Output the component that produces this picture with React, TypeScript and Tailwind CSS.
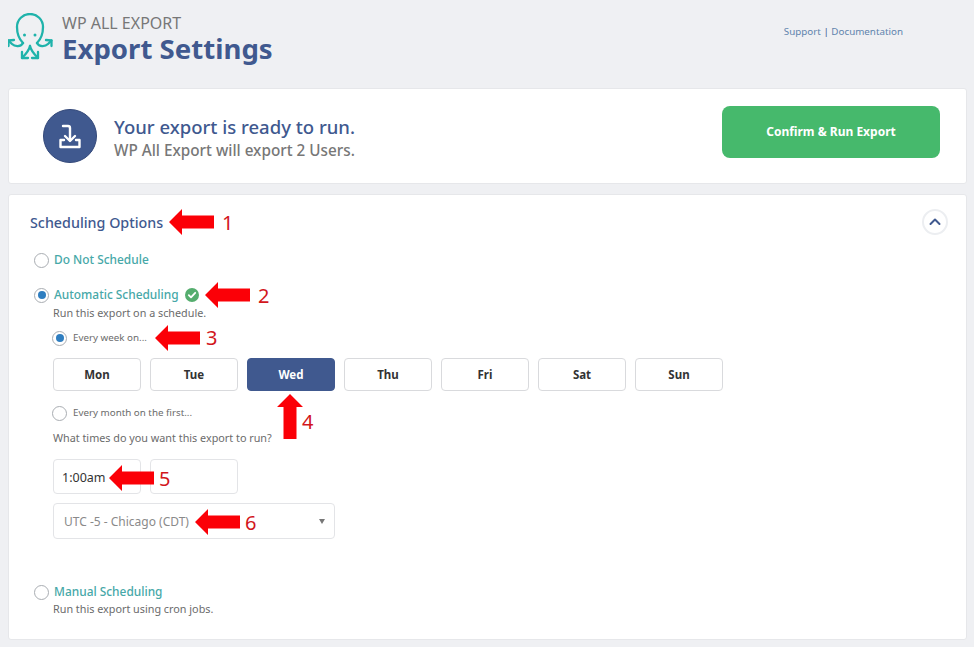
import React from 'react';

const days = ['Mon', 'Tue', 'Wed', 'Thu', 'Fri', 'Sat', 'Sun'];

const Radio: React.FC<{ checked?: boolean }> = ({ checked }) => (
  <span className="w-[15px] h-[15px] shrink-0 rounded-full border border-[#a9adb2] bg-white flex items-center justify-center">
    {checked && <span className="w-[8px] h-[8px] rounded-full bg-[#2f7ec0]" />}
  </span>
);

const Logo = () => (
  <svg width="48" height="50" viewBox="4 5 48 50" fill="none" stroke="#1fb3ab" strokeWidth="2.3" strokeLinecap="round" strokeLinejoin="round">
    <path d="M19 35 C15 31 13 26 13 19 A13 13 0 0 1 39 19 C39 26 37 31 33 35" />
    <path d="M19 35 C17 39 11 39 8 36 L4.500 32.500" />
    <path d="M33 35 C35 39 41 39 44 36 L47.500 32.500" />
    <path d="M4.500 38 L4.500 32.500 L10 32" />
    <path d="M42 32 L47.500 32.500 L47.500 38" />
    <path d="M26 38 C25 43 22 46 18 50" />
    <path d="M26 38 C27 43 30 46 34 50" />
    <path d="M18 44 L18 50 L24 50" />
    <path d="M28 50 L34 50 L34 44" />
    <circle cx="20.500" cy="27" r="1.500" fill="#1fb3ab" stroke="none" />
    <circle cx="31" cy="27" r="1.500" fill="#1fb3ab" stroke="none" />
  </svg>
);

const Arrow: React.FC<{ className: string }> = ({ className }) => (
  <svg className={`absolute ${className}`} width="45" height="26" viewBox="0 0 45 26" fill="#fb0007">
    <path d="M0 13 L13 0 L13 6.500 L45 6.500 L45 19.500 L13 19.500 L13 26 Z" />
  </svg>
);

const Num: React.FC<{ className: string; children: React.ReactNode }> = ({ className, children }) => (
  <span className={`absolute text-[20px] leading-none text-[#d2161c] ${className}`}>{children}</span>
);

export default function App() {
  return (
    <div className="relative w-[974px] h-[647px] overflow-hidden bg-[#eff0f3] pl-[8px] pr-[7px] font-['Noto_Sans',sans-serif]">
      <header className="h-[88px] flex items-start">
        <div className="mt-[13px]">
          <Logo />
        </div>
        <div className="ml-[6px] mt-[14px]">
          <div className="text-[16px] leading-[19px] text-[#777]">WP ALL EXPORT</div>
          <h1 className="text-[27.600px] leading-[31px] font-bold text-[#40598f]">Export Settings</h1>
        </div>
        <div className="ml-auto mr-[64px] mt-[24px] text-[9.800px] leading-[16px] text-[#5f84ad]">
          Support <span className="text-[#40598f]">|</span> Documentation
        </div>
      </header>

      <section className="h-[96px] bg-white rounded-[3px] border border-[#e6e7ea] flex items-center pl-[34px] pr-[26px]">
        <div className="w-[54px] h-[54px] rounded-full bg-[#40598f] border border-[#34497a] flex items-center justify-center">
          <svg width="26" height="26" viewBox="0 0 26 26" fill="none" stroke="#fff" strokeWidth="2.400" strokeLinecap="round" strokeLinejoin="round">
            <path d="M6 3 L11 3 Q13 3 13 5 L13 17" />
            <path d="M8 13 L13 18 L18 13" />
            <path d="M7 17 L3.500 17 L3.500 24 L22.500 24 L22.500 17 L19 17" />
          </svg>
        </div>
        <div className="ml-[17px]">
          <div className="text-[18.500px] leading-[27px] font-medium text-[#40598f]">Your export is ready to run.</div>
          <div className="text-[15.300px] leading-[20px] font-medium text-[#777]">WP All Export will export 2 Users.</div>
        </div>
        <button className="ml-auto mt-[-9px] w-[218px] h-[52px] rounded-[8px] bg-[#46b96c] text-white text-[12px] font-bold">
          Confirm &amp; Run Export
        </button>
      </section>

      <section className="mt-[10px] h-[446px] bg-white rounded-[3px] border border-[#e6e7ea] pl-[21px] pr-[18px]">
        <div className="h-[58px] flex items-center justify-between">
          <h2 className="text-[14.300px] font-medium text-[#40598f] mt-[-2px]">Scheduling Options</h2>
          <span className="w-[26px] h-[26px] mt-[-4px] rounded-full border-2 border-[#eceef1] bg-white flex items-center justify-center">
            <svg width="12" height="8" viewBox="0 0 12 8" fill="none" stroke="#40598f" strokeWidth="2" strokeLinecap="round" strokeLinejoin="round">
              <path d="M1.500 6 L6 1.500 L10.500 6" />
            </svg>
          </span>
        </div>

        <div className="flex items-center h-[16px] ml-[4px] mt-[-1px] gap-[5px]">
          <Radio />
          <span className="text-[11.900px] font-medium text-[#46a8a8]">Do Not Schedule</span>
        </div>

        <div className="flex items-center h-[16px] ml-[4px] mt-[19px] gap-[5px]">
          <Radio checked />
          <span className="text-[11.900px] font-medium text-[#46a8a8]">Automatic Scheduling</span>
          <svg className="ml-[1px]" width="14" height="14" viewBox="0 0 14 14">
            <circle cx="7" cy="7" r="7" fill="#55ad6e" />
            <path d="M3.800 7.200 L6 9.400 L10.200 4.800" fill="none" stroke="#fff" strokeWidth="1.800" strokeLinecap="round" strokeLinejoin="round" />
          </svg>
        </div>

        <div className="ml-[23px]">
          <p className="mt-[2px] text-[10.800px] leading-[16px] text-[#6b6b6b]">Run this export on a schedule.</p>
          <div className="flex items-center h-[16px] mt-[9px] ml-[-1px] gap-[6px]">
            <Radio checked />
            <span className="text-[9.800px] text-[#6b6b6b]">Every week on...</span>
          </div>
          <div className="flex gap-[9px] mt-[12px]">
            {days.map(d => (
              <button
                key={d}
                className={
                  d === 'Wed'
                    ? 'w-[88px] h-[33px] pt-[1px] rounded-[4px] bg-[#40598f] border border-[#40598f] text-white text-[11.500px] font-bold'
                    : 'w-[88px] h-[33px] pt-[1px] rounded-[4px] bg-white border border-[#d9dadd] text-[#333] text-[11.500px] font-bold'
                }
              >
                {d}
              </button>
            ))}
          </div>
          <div className="flex items-center h-[16px] mt-[14px] ml-[-1px] gap-[6px]">
            <Radio />
            <span className="text-[9.800px] text-[#6b6b6b]">Every month on the first...</span>
          </div>
          <p className="mt-[9px] text-[10.800px] leading-[16px] text-[#6b6b6b]">What times do you want this export to run?</p>
          <div className="flex gap-[9px] mt-[13px]">
            <div className="w-[88px] h-[35px] rounded-[4px] border border-[#e3e4e7] pl-[8px] pt-[3px] flex items-center text-[12.500px] text-[#333]">1:00am</div>
            <div className="w-[88px] h-[35px] rounded-[4px] border border-[#e3e4e7]" />
          </div>
          <div className="mt-[9px] w-[282px] h-[36px] rounded-[4px] border border-[#e3e4e7] pl-[10px] pr-[9px] flex items-center justify-between text-[12px] text-[#8a8a8a]">
            <span className="pt-[1px]">UTC -5 - Chicago (CDT)</span>
            <span className="w-0 h-0 border-x-[3px] border-x-transparent border-t-[5px] border-t-[#777]" />
          </div>
        </div>

        <div className="flex items-center h-[16px] ml-[4px] mt-[45px] gap-[5px]">
          <Radio />
          <span className="text-[11.900px] font-medium text-[#46a8a8]">Manual Scheduling</span>
        </div>
        <p className="ml-[23px] mt-[1px] text-[10.800px] leading-[16px] text-[#6b6b6b]">Run this export using cron jobs.</p>
      </section>

      <Arrow className="left-[169px] top-[209px]" />
      <Num className="left-[222px] top-[213px]">1</Num>
      <Arrow className="left-[205px] top-[282px]" />
      <Num className="left-[258px] top-[286px]">2</Num>
      <Arrow className="left-[155px] top-[325px]" />
      <Num className="left-[206px] top-[328px]">3</Num>
      <svg className="absolute left-[277px] top-[394px]" width="26" height="45" viewBox="0 0 26 45" fill="#fb0007">
        <path d="M13 0 L26 13 L19.500 13 L19.500 45 L6.500 45 L6.500 13 L0 13 Z" />
      </svg>
      <Num className="left-[302px] top-[412px]">4</Num>
      <Arrow className="left-[109px] top-[465px]" />
      <Num className="left-[159px] top-[469px]">5</Num>
      <Arrow className="left-[195px] top-[509px]" />
      <Num className="left-[245px] top-[513px]">6</Num>
    </div>
  );
}
